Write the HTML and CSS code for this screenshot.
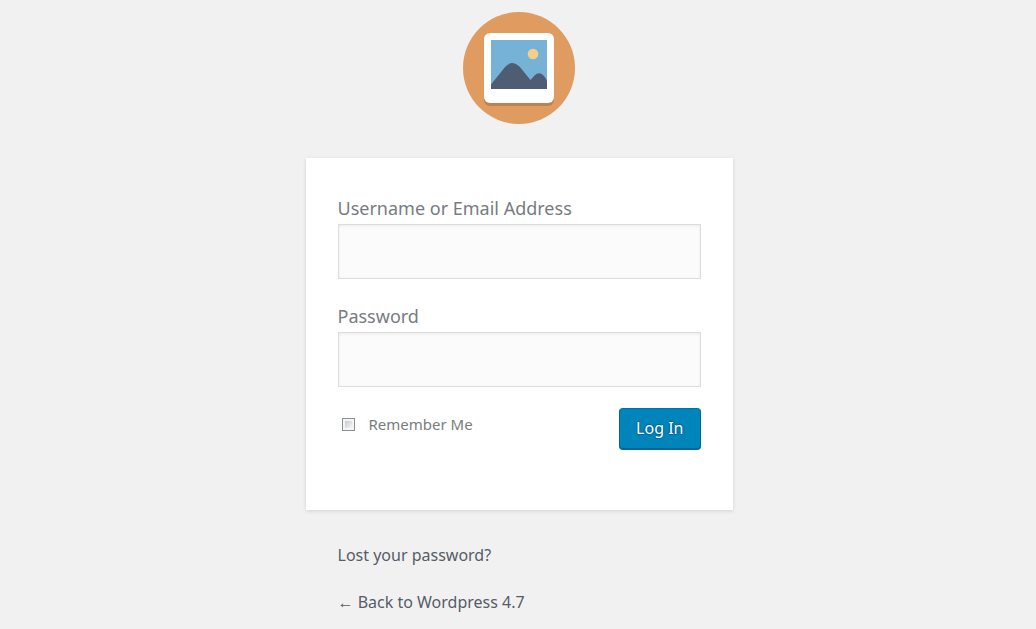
FILE: index.html
```html
<!DOCTYPE html>
<html lang="en">
<head>
<meta charset="utf-8">
<meta name="viewport" content="width=device-width, initial-scale=1">
<title>Log In</title>
<link rel="stylesheet" href="styles.css">
</head>
<body>
<main class="login">
  <a class="logo" href="#" aria-label="Wordpress 4.7">
    <svg class="logo-art" viewBox="0 0 112 112" aria-hidden="true">
      <circle cx="56" cy="56" r="56" fill="#e09b60"/>
      <rect x="21" y="24" width="70" height="70" rx="6" fill="#bc8250"/>
      <rect x="21" y="21" width="70" height="70" rx="6" fill="#fff"/>
      <rect x="28" y="28" width="56" height="49" fill="#76b2d6"/>
      <circle cx="70" cy="42" r="5.3" fill="#f4cf86"/>
      <path d="M28 77V72.500L42.500 54.500Q49.500 47.500 56.500 54.500L67.500 68L71.500 63.500Q76 59 80.500 63.500Q82.500 65.500 84 69V77Z" fill="#4f5d73"/>
    </svg>
  </a>
  <form class="card">
    <div class="field">
      <label class="field-label" for="user">Username or Email Address</label>
      <input class="field-input" id="user" type="text">
    </div>
    <div class="field">
      <label class="field-label" for="pass">Password</label>
      <input class="field-input" id="pass" type="password">
    </div>
    <div class="actions">
      <label class="remember" for="remember"><input class="check" id="remember" type="checkbox">Remember Me</label>
      <button class="submit" type="submit">Log In</button>
    </div>
  </form>
  <nav class="links">
    <a class="link" href="#">Lost your password?</a>
    <a class="link" href="#">← Back to Wordpress 4.7</a>
  </nav>
</main>
</body>
</html>
```
FILE: styles.css
```css
* {
  box-sizing: border-box;
}

body {
  margin: 0;
  padding-left: 2px;
  background: #f1f1f1;
  color: #777c81;
  font-family: "Segoe UI", "Noto Sans", "Open Sans", sans-serif;
  font-size: 16px;
}

.login {
  max-width: 427px;
  margin: 0 auto;
  padding-top: 12px;
}

.logo {
  display: block;
  width: 112px;
  margin: 0 auto 34px;
}

.logo-art {
  display: block;
  width: 100%;
}

.card {
  padding: 36px 32px 60px;
  background: #fff;
  box-shadow: 0 1px 4px rgba(0, 0, 0, 0.13);
}

.field {
  margin-bottom: 23px;
}

.field-label {
  display: block;
  margin-bottom: 2px;
  font-size: 18px;
  line-height: 28px;
}

.field-input {
  display: block;
  width: 100%;
  height: 55px;
  padding: 4px 8px;
  border: 1px solid #ddd;
  border-radius: 0;
  outline: none;
  background: #fbfbfb;
  box-shadow: inset 0 1px 3px rgba(0, 0, 0, 0.07);
  color: #32373c;
  font: inherit;
  font-size: 28px;
}

.actions {
  display: flex;
  align-items: flex-start;
  justify-content: space-between;
  margin-top: -2px;
}

.remember {
  display: flex;
  align-items: center;
  gap: 14px;
  padding-left: 4px;
  font-size: 15px;
  line-height: 32px;
}

.check {
  appearance: none;
  width: 13px;
  height: 13px;
  margin: 0;
  border: 1px solid #8e8f8f;
  background: linear-gradient(135deg, #c5cad0, #f6f6f6) content-box, #f4f4f4;
  padding: 2px;
}

.submit {
  height: 42px;
  padding: 0 16px 2px;
  border: 1px solid;
  border-color: #0073aa #006799 #006799;
  border-radius: 4px;
  background: #0085ba;
  box-shadow: inset 0 -1px 0 #006799;
  color: #fff;
  font: inherit;
  font-size: 16px;
  text-shadow: 0 -1px 1px #006799, 1px 0 1px #006799, 0 1px 1px #006799, -1px 0 1px #006799;
}

.links {
  display: flex;
  flex-direction: column;
  align-items: flex-start;
  gap: 23px;
  padding: 33px 32px 0;
}

.link {
  color: #555d66;
  font-size: 16px;
  line-height: 24px;
  text-decoration: none;
}
```
